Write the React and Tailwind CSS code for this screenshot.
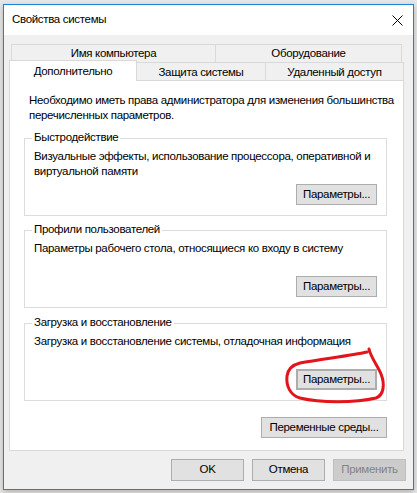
import React from 'react';

// ── Shared Classes ──
const font = { fontFamily: '"Segoe UI", "Liberation Sans", Arial, sans-serif' };
const txt = 'text-[11.5px] tracking-[-0.32px] whitespace-nowrap';
const btn = `h-[21px] bg-[#e1e1e1] border border-[#adadad] ${txt} text-black flex items-center justify-center leading-none`;

function Group({ title, text, focused, className = '' }) {
    return (
        <div className={`relative border border-[#dcdcdc] h-[78px] flex flex-col pl-[9px] pr-[9px] pt-[10px] pb-[10px] ${className}`}>
            <span className={`absolute -top-[9px] left-[7px] bg-white px-[2px] leading-[15px] ${txt}`}>{title}</span>
            <p className={`leading-[15px] ${txt}`}>{text}</p>
            <div className="mt-auto flex justify-end">
                <button className={`${btn} w-[81px] ${focused ? 'border-2 border-[#0078d7]' : ''}`}>Параметры...</button>
            </div>
        </div>
    );
}

export default function App() {
    return (
        <div className="relative w-[417px] h-[493px] bg-[#e8e8e8] overflow-hidden text-black" style={font}>
            {/* ── Window ── */}
            <div className="absolute left-[3px] top-[4px] w-[411px] h-[486px] border border-[#1883d7] bg-[#f0f0f0] flex flex-col shadow-[0_2px_6px_rgba(0,0,0,0.25)]">
                {/* Title bar */}
                <div className="h-[30px] bg-white flex items-center justify-between pl-[8px] pr-[9px] shrink-0">
                    <span className={txt}>Свойства системы</span>
                    <svg width="11" height="11" viewBox="0 0 11 11" className="mr-[1px]">
                        <path d="M0.5 0.5 L10.5 10.5 M10.5 0.5 L0.5 10.5" stroke="#000" strokeWidth="1" />
                    </svg>
                </div>

                {/* Tabs */}
                <div className="ml-[5px] mt-[9px] w-[395px]">
                    <div className={`ml-[2px] flex h-[18px] ${txt}`}>
                        <div className="w-[205px] border border-b-0 border-[#d9d9d9] bg-[#f0f0f0] flex items-center justify-center">Имя компьютера</div>
                        <div className="w-[187px] -ml-[1px] border border-b-0 border-[#d9d9d9] bg-[#f0f0f0] flex items-center justify-center">Оборудование</div>
                    </div>
                    <div className={`flex items-end h-[18px] ${txt}`}>
                        <div className="relative z-10 w-[128px] h-[21px] -mb-[1px] border border-b-0 border-[#d9d9d9] bg-white flex items-start justify-center pt-[2px]">Дополнительно</div>
                        <div className="w-[130px] -ml-[1px] h-[18px] border border-b-0 border-[#d9d9d9] bg-[#f0f0f0] flex items-center justify-center pt-[2px]">Защита системы</div>
                        <div className="w-[139px] -ml-[1px] h-[18px] border border-b-0 border-[#d9d9d9] bg-[#f0f0f0] flex items-center justify-center pt-[2px]">Удаленный доступ</div>
                    </div>

                    {/* Panel */}
                    <div className="h-[371px] border border-[#d9d9d9] bg-white pt-[12px] pl-[14px] pr-[16px]">
                        <p className={`ml-[5px] leading-[15px] ${txt}`}>
                            Необходимо иметь права администратора для изменения большинства<br />перечисленных параметров.
                        </p>
                        <Group
                            className="mt-[15px]"
                            title="Быстродействие"
                            text={<>Визуальные эффекты, использование процессора, оперативной и<br />виртуальной памяти</>}
                        />
                        <Group
                            className="mt-[14px]"
                            title="Профили пользователей"
                            text="Параметры рабочего стола, относящиеся ко входу в систему"
                        />
                        <Group
                            className="mt-[15px] h-[77px]"
                            title="Загрузка и восстановление"
                            text="Загрузка и восстановление системы, отладочная информация"
                            focused
                        />
                        <div className="mt-[16px] flex justify-end">
                            <button className={`${btn} w-[126px]`}>Переменные среды...</button>
                        </div>
                    </div>
                </div>

                {/* Dialog buttons */}
                <div className="mt-[8px] flex justify-end gap-[8px] pr-[7px]">
                    <button className={`${btn} w-[73px] h-[22px]`}>OK</button>
                    <button className={`${btn} w-[73px] h-[22px]`}>Отмена</button>
                    <button className={`w-[73px] h-[22px] bg-[#cccccc] border border-[#bfbfbf] text-[#838383] flex items-center justify-center leading-none ${txt}`}>Применить</button>
                </div>
            </div>

            {/* Hand-drawn red mark */}
            <svg className="absolute left-0 top-0 pointer-events-none" width="417" height="493" viewBox="0 0 417 493">
                <path
                    d="M369 349 C371 358 378 366 381 374 C385 384 384 395 376 398 C355 403 320 403 300 398 C290 395 286 386 287 376 C288 369 292 365 300 363 C320 359 350 356 367 352"
                    fill="none"
                    stroke="#e3141b"
                    strokeWidth="3"
                    strokeLinecap="round"
                    strokeLinejoin="round"
                />
            </svg>
        </div>
    );
}
